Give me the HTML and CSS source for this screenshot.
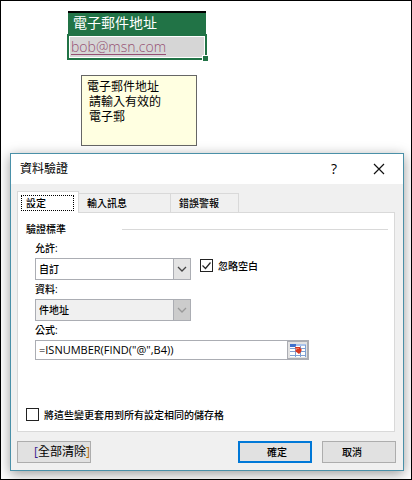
FILE: index.html
```html
<!DOCTYPE html>
<html lang="zh-Hant">
<head>
<meta charset="utf-8">
<meta name="viewport" content="width=device-width, initial-scale=1">
<title>資料驗證</title>
<link rel="stylesheet" href="styles.css">
</head>
<body>
<main class="page">
  <section class="sheet">
    <table class="cells">
      <thead><tr><th scope="col">電子郵件地址</th></tr></thead>
      <tbody><tr><td><div class="selected"><a href="mailto:bob@msn.com">bob@msn.com</a><span class="handle"></span></div></td></tr></tbody>
    </table>
    <div class="hint">
      <strong class="hint-title">電子郵件地址</strong>
      <p class="hint-text">請輸入有效的<br>電子郵</p>
    </div>
  </section>

  <form class="dialog" role="dialog" aria-labelledby="dialog-title">
    <header class="titlebar">
      <h1 id="dialog-title">資料驗證</h1>
      <button type="button" class="icon-button help" aria-label="說明">?</button>
      <button type="button" class="icon-button" aria-label="關閉">
        <svg width="12" height="12" viewBox="0 0 12 12"><path d="M1 1l10 10M11 1L1 11" fill="none" stroke="#111" stroke-width="1.2"/></svg>
      </button>
    </header>
    <div class="content">
      <div class="tabs" role="tablist">
        <button type="button" class="tab active" role="tab" aria-selected="true"><span>設定</span></button>
        <button type="button" class="tab message" role="tab" aria-selected="false">輸入訊息</button>
        <button type="button" class="tab" role="tab" aria-selected="false">錯誤警報</button>
      </div>
      <div class="panel" role="tabpanel">
        <h2 class="group">驗證標準</h2>
        <div class="fields">
          <label class="caption" for="allow">允許:</label>
          <div class="row">
            <div class="combo">
              <select id="allow"><option>自訂</option></select>
              <span class="arrow"><svg width="10" height="6" viewBox="0 0 10 6"><path d="M1 1l4 4 4-4" fill="none" stroke="#444" stroke-width="1.3"/></svg></span>
            </div>
            <label class="check"><input type="checkbox" checked>忽略空白</label>
          </div>
          <label class="caption" for="data">資料:</label>
          <div class="combo off">
            <select id="data" disabled><option>件地址</option></select>
            <span class="arrow"><svg width="10" height="6" viewBox="0 0 10 6"><path d="M1 1l4 4 4-4" fill="none" stroke="#999" stroke-width="1.3"/></svg></span>
          </div>
          <label class="caption" for="formula">公式:</label>
          <div class="formula">
            <input type="text" id="formula" value='=ISNUMBER(FIND("@",B4))'>
            <button type="button" class="picker" aria-label="選取範圍">
              <svg width="16" height="13" viewBox="0 0 16 13">
                <path fill="#fff" d="M0 0h16v13H0z"/>
                <path fill="#3f70cc" d="M0 0h6v3H0z"/>
                <path fill="#a9c4ec" d="M6 0h10v2H6z"/>
                <path d="M0 4.500h16M0 7.500h16M0 11.500h16M5.500 2v11M10.500 2v11M15.500 1v12" fill="none" stroke="#7fa0d2"/>
                <path fill="#d93620" d="M5 3h5l1 2 1 1-1 1 0 1-2 2-4-3 1-1z"/>
                <path fill="#f27a5c" d="M6 4h3v1H7v1H6z"/>
              </svg>
            </button>
          </div>
        </div>
        <label class="check apply"><input type="checkbox">將這些變更套用到所有設定相同的儲存格</label>
      </div>
      <footer class="actions">
        <button type="button" class="button clear"><span class="open">[</span>全部清除<span class="close">]</span></button>
        <button type="submit" class="button primary">確定</button>
        <button type="button" class="button cancel">取消</button>
      </footer>
    </div>
  </form>
</main>
</body>
</html>
```
FILE: styles.css
```css
* { box-sizing: border-box; }

body {
  margin: 0;
  background: #fff;
  color: #000;
  font: 500 10px/14px "Open Sans", "Noto Sans CJK TC", sans-serif;
}

button, input, select { font: inherit; color: inherit; margin: 0; }
h1, h2, p { margin: 0; font-weight: 500; }

.page {
  min-height: 100vh;
  padding: 10px 7px 8px 9px;
  border: 1px solid #000;
  overflow: hidden;
}

.sheet { padding-left: 57px; }

.cells { width: 140px; border-spacing: 0; }
.cells th {
  height: 23px;
  padding: 0 0 0 5px;
  border: solid #fff;
  border-width: 0 1px;
  background: linear-gradient(#000 2px, #217346 2px);
  background-clip: padding-box;
  color: #fff;
  font-size: 14px;
  font-weight: 400;
  line-height: 20px;
  text-align: left;
}
.cells td { padding: 0; }
.selected {
  position: relative;
  height: 26px;
  padding: 0 2px;
  border: 2px solid #217346;
  background: #d6d6d6;
  box-shadow: inset 0 0 0 1px #fff;
  font-size: 14px;
  font-weight: 300;
  line-height: 22px;
}
.selected a { color: #954f72; text-underline-offset: 2px; text-decoration-thickness: 1px; }
.handle {
  position: absolute;
  right: -3px;
  bottom: -3px;
  width: 6px;
  height: 6px;
  border: solid #fff;
  border-width: 1px 0 0 1px;
  background: #217346;
}

.hint {
  width: 116px;
  min-height: 71px;
  margin: 15px 0 7px 14px;
  padding: 3px 5px;
  border: 1px solid #666;
  background: #ffffe1;
  font-size: 12px;
  line-height: 15px;
}
.hint-title { display: block; font-weight: 400; }
.hint-text { padding-left: 2px; font-weight: 400; }

.dialog {
  border: 1px solid #4a90a8;
  background: #f0f0f0;
  box-shadow: 0 3px 12px rgba(0, 0, 0, 0.4);
}
.titlebar {
  display: flex;
  align-items: center;
  height: 30px;
  padding: 0 12px 0 9px;
  background: #fff;
}
.titlebar h1 { flex: 1; font-size: 12px; font-weight: 400; }
.icon-button {
  display: grid;
  place-items: center;
  width: 24px;
  height: 24px;
  margin-left: 21px;
  padding: 0;
  border: 0;
  background: none;
}
.help { font-size: 14px; }

.content { padding: 7px 7px 7px 6px; }

.tabs { display: flex; align-items: flex-end; height: 21px; padding-right: 1px; }
.tab {
  height: 19px;
  width: 68px;
  padding: 0 8px;
  border: 1px solid #d9d9d9;
  border-width: 1px 1px 0 0;
  background: #f0f0f0;
  text-align: left;
}
.tab.message { width: 92px; }
.tab.active {
  position: relative;
  width: 62px;
  height: 22px;
  margin-bottom: -1px;
  padding: 3px 4px 2px 3px;
  border-left-width: 1px;
  background: #fff;
}
.tab.active span { display: block; padding-left: 4px; border: 1px dotted #000; }

.panel {
  margin-right: 1px;
  padding: 9px 6px 9px 8px;
  border: 1px solid #d9d9d9;
  background: #fff;
}
.group {
  display: grid;
  grid-template-columns: 96px 1fr;
  align-items: center;
  font-size: 10px;
}
.group::after { content: ""; height: 1px; background: #d9d9d9; }

.fields { padding: 5px 0 0 9px; }
.caption { display: block; height: 17px; line-height: 14px; }
.row { display: flex; gap: 9px; margin-bottom: 2px; }
.combo { position: relative; width: 156px; height: 22px; }
.fields > .combo { margin-bottom: 2px; }
.combo select {
  width: 100%;
  height: 100%;
  padding: 0 20px 0 3px;
  border: 1px solid #abadb3;
  border-radius: 0;
  background: #fff;
  appearance: none;
  opacity: 1;
}
.combo.off select { background: #f0f0f0; color: #000; }
.arrow {
  position: absolute;
  inset: 0 0 0 auto;
  display: grid;
  place-items: center;
  width: 18px;
  border: 1px solid #abadb3;
  background: #e3e3e3;
  pointer-events: none;
}
.off .arrow { background: #ccc; }

.check { display: flex; align-items: center; gap: 5px; height: 15px; }
.check input {
  width: 13px;
  height: 13px;
  border: 1px solid #222;
  background: #fff;
  appearance: none;
}
.check input:checked {
  background: url("data:image/svg+xml,%3Csvg xmlns='http://www.w3.org/2000/svg' viewBox='0 0 11 11'%3E%3Cpath d='M1.500 5.500l3 3 5-6' fill='none' stroke='%23222' stroke-width='1.200'/%3E%3C/svg%3E") center / 11px 11px;
}

.formula { display: flex; width: 274px; max-width: 100%; height: 20px; border: 1px solid #abadb3; }
.formula input {
  flex: 1;
  min-width: 0;
  padding: 0 3px;
  border: 0;
  background: #fff;
  font-size: 11px;
  font-weight: 400;
}
.picker {
  display: grid;
  place-items: center;
  width: 21px;
  padding: 0;
  border: 1px solid #abadb3;
  background: #e3e3e3;
}

.apply { margin-top: 47px; }

.actions { display: flex; gap: 10px; padding-top: 9px; }
.button {
  width: 74px;
  height: 22px;
  padding: 0;
  border: 1px solid #adadad;
  background: #e1e1e1;
}
.clear {
  margin-right: auto;
  font-size: 12px;
  font-weight: 400;
  line-height: 18px;
  text-align: right;
}
.open { color: #3b1f8f; }
.close { color: #b36b00; }
.primary { padding-left: 4px; border: 2px solid #0078d7; }
.cancel { padding-right: 14px; }
```
